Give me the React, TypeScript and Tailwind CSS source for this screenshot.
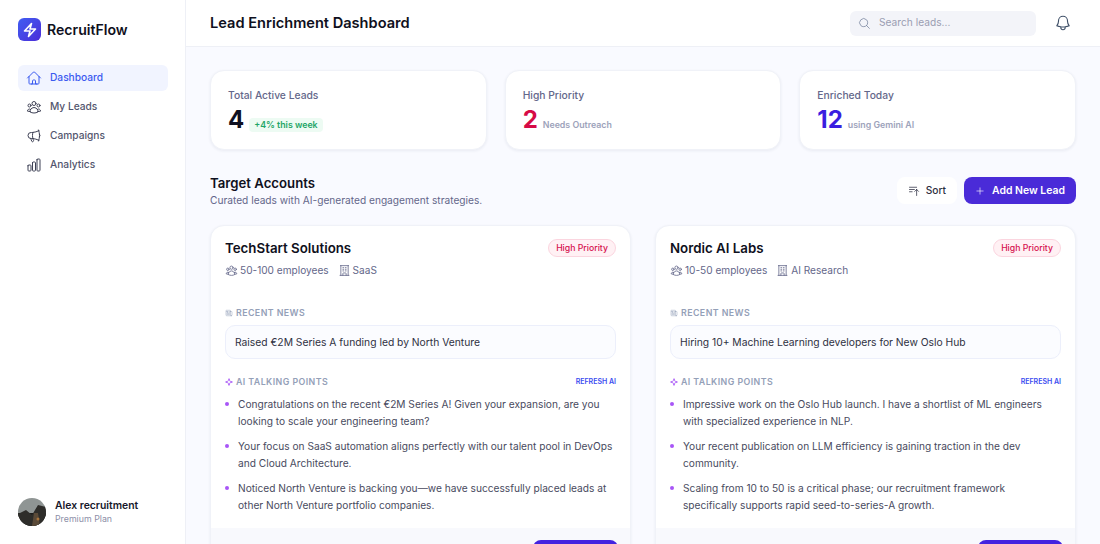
import {
  HiOutlineBarsArrowUp,
  HiOutlineBell,
  HiOutlineBolt,
  HiOutlineBuildingOffice,
  HiOutlineChartBar,
  HiOutlineHome,
  HiOutlineMagnifyingGlass,
  HiOutlineMegaphone,
  HiOutlineNewspaper,
  HiOutlinePlus,
  HiOutlineUserGroup,
} from 'react-icons/hi2';
import { Sparkle } from 'lucide-react';

const nav = [
  { label: 'Dashboard', icon: HiOutlineHome, active: true },
  { label: 'My Leads', icon: HiOutlineUserGroup },
  { label: 'Campaigns', icon: HiOutlineMegaphone },
  { label: 'Analytics', icon: HiOutlineChartBar },
];

const leads = [
  {
    name: 'TechStart Solutions',
    size: '50-100 employees',
    sector: 'SaaS',
    news: 'Raised €2M Series A funding led by North Venture',
    points: [
      'Congratulations on the recent €2M Series A! Given your expansion, are you looking to scale your engineering team?',
      'Your focus on SaaS automation aligns perfectly with our talent pool in DevOps and Cloud Architecture.',
      'Noticed North Venture is backing you—we have successfully placed leads at other North Venture portfolio companies.',
    ],
  },
  {
    name: 'Nordic AI Labs',
    size: '10-50 employees',
    sector: 'AI Research',
    news: 'Hiring 10+ Machine Learning developers for New Oslo Hub',
    points: [
      'Impressive work on the Oslo Hub launch. I have a shortlist of ML engineers with specialized experience in NLP.',
      'Your recent publication on LLM efficiency is gaining traction in the dev community.',
      'Scaling from 10 to 50 is a critical phase; our recruitment framework specifically supports rapid seed-to-series-A growth.',
    ],
  },
];

function Avatar() {
  return (
    <svg viewBox="0 0 28 28" className="h-7 w-7 shrink-0 rounded-full">
      <rect width="28" height="28" fill="#8f9594" />
      <rect y="15" width="28" height="13" fill="#1d1c1b" />
      <path d="M0 16 L8 12 L14 17 L20 7 L28 9 V28 H0 Z" fill="#2e2d2a" />
      <path d="M14 28 L16 15 L20 15 L22 28 Z" fill="#5a4a38" />
      <circle cx="20" cy="21" r="1.5" fill="#a8743c" />
    </svg>
  );
}

function StatCard({ title, value, valueClass, children }: { title: string; value: string; valueClass: string; children: React.ReactNode }) {
  return (
    <div className="h-20 rounded-[14px] border border-[#f0f2f8] bg-white px-[17px] pt-4 shadow-[0_1px_3px_rgba(30,41,90,0.07)]">
      <p className="text-[10.3px] leading-4 font-medium text-[#64678a]">{title}</p>
      <div className="mt-px flex items-baseline gap-[5px]">
        <span className={`text-[24px] leading-8 font-bold ${valueClass}`}>{value}</span>
        {children}
      </div>
    </div>
  );
}

function LeadCard({ lead }: { lead: (typeof leads)[number] }) {
  return (
    <div className="rounded-[14px] border border-[#f0f2f8] bg-white shadow-[0_1px_3px_rgba(30,41,90,0.07)]">
      <div className="px-[14px] pt-[13px] pb-[14px]">
        <div className="flex items-center justify-between">
          <h3 className="text-[13.3px] leading-[18px] font-semibold text-[#0f1020]">{lead.name}</h3>
          <span className="rounded-full border border-[#fbd5df] bg-[#fff1f4] px-[7px] py-px text-[8.7px] leading-[14px] font-medium text-[#d6114f]">
            High Priority
          </span>
        </div>
        <div className="mt-[5px] flex items-center gap-[9px] text-[10.1px] leading-4 text-[#64678a]">
          <span className="flex items-center gap-[2px]">
            <HiOutlineUserGroup className="h-[13px] w-[13px] text-[#64678a]" />
            {lead.size}
          </span>
          <span className="flex items-center gap-[2px]">
            <HiOutlineBuildingOffice className="h-[13px] w-[13px] text-[#64678a]" />
            {lead.sector}
          </span>
        </div>

        <div className="mt-[29px] flex items-center gap-[3px] text-[8.8px] leading-3 font-semibold tracking-[0.44px] text-[#94a0b8]">
          <HiOutlineNewspaper className="h-2 w-2" />
          RECENT NEWS
        </div>
        <div className="mt-[6px] rounded-[10px] border border-[#eceffb] bg-[#fbfcff] px-[9px] py-[9px] text-[10.3px] leading-[14px] text-[#2f3142]">
          {lead.news}
        </div>

        <div className="mt-[17px] flex items-center justify-between">
          <div className="flex items-center gap-[3px] text-[8.8px] leading-3 font-semibold tracking-[0.44px] text-[#94a0b8]">
            <Sparkle className="h-2 w-2 text-[#a855f7]" strokeWidth={2.5} />
            AI TALKING POINTS
          </div>
          <span className="text-[7px] leading-3 font-semibold text-[#3b4cf0]">REFRESH AI</span>
        </div>

        <ul className="mt-[8px] flex flex-col gap-2">
          {lead.points.map((point) => (
            <li key={point} className="flex gap-[9px] text-[10.17px] leading-[17px] text-[#484a5e]">
              <span className="mt-[6px] h-1 w-1 shrink-0 rounded-full bg-[#a855f7]" />
              <span>{point}</span>
            </li>
          ))}
        </ul>
      </div>
      <div className="flex h-10 justify-end rounded-b-[14px] bg-[#f8f9fd] px-3 pt-3">
        <div className="h-7 w-[85px] rounded-lg bg-[#4323e0]" />
      </div>
    </div>
  );
}

export default function App() {
  return (
    <div className="flex h-screen overflow-hidden bg-[#f9faff] font-['Inter',sans-serif]">
      {/* Sidebar */}
      <aside className="flex w-[186px] shrink-0 flex-col border-r border-[#eef0f6] bg-white pt-[18px] pr-[17px] pb-[18px] pl-[18px]">
        <div className="flex items-center gap-[6px]">
          <div className="flex h-[23px] w-[23px] items-center justify-center rounded-[6px] bg-gradient-to-br from-[#3f5cf2] to-[#4a2bd8]">
            <HiOutlineBolt className="h-4 w-4 text-white" style={{ strokeWidth: 2.4 }} />
          </div>
          <span className="text-[14.1px] leading-[23px] font-semibold text-[#0f1020]">RecruitFlow</span>
        </div>

        <nav className="mt-6 flex flex-col gap-[3px]">
          {nav.map((item) => (
            <a
              key={item.label}
              className={`flex h-[26px] items-center gap-2 rounded-md px-2 text-[10.2px] font-medium ${
                item.active ? 'bg-[#f1f4ff] text-[#3b5bf0]' : 'text-[#53566e]'
              }`}
            >
              <item.icon className={`h-4 w-4 ${item.active ? 'text-[#3b5bf0]' : 'text-[#3f4256]'}`} />
              {item.label}
            </a>
          ))}
        </nav>

        <div className="mt-auto flex items-center gap-[9px]">
          <Avatar />
          <div>
            <p className="text-[10.4px] leading-[14px] font-semibold text-[#17182b]">Alex recruitment</p>
            <p className="text-[8.8px] leading-3 text-[#8d8fa8]">Premium Plan</p>
          </div>
        </div>
      </aside>

      <div className="flex min-w-0 flex-1 flex-col">
        {/* Header */}
        <header className="flex h-[47px] shrink-0 items-center justify-between border-b border-[#eef0f6] bg-white pr-[28px] pl-6">
          <h1 className="pt-px text-[14.6px] font-semibold text-[#0f1020]">Lead Enrichment Dashboard</h1>
          <div className="flex items-center gap-[18px]">
            <div className="flex h-[25px] w-[186px] items-center gap-[8px] rounded-md bg-[#f3f4f9] px-[8px] text-[10.2px] text-[#9a9db2]">
              <HiOutlineMagnifyingGlass className="h-[13px] w-[13px] text-[#7e8aa3]" />
              Search leads...
            </div>
            <HiOutlineBell className="h-[18px] w-[18px] text-[#3f5068]" />
          </div>
        </header>

        {/* Main */}
        <main className="min-h-0 flex-1 px-6 pt-[23px]">
          <div className="grid grid-cols-3 gap-[18px]">
            <StatCard title="Total Active Leads" value="4" valueClass="text-[#0f1020]">
              <span className="rounded bg-[#edfbf3] px-[5px] py-px text-[8.8px] leading-3 font-semibold text-[#1ea566]">+4% this week</span>
            </StatCard>
            <StatCard title="High Priority" value="2" valueClass="text-[#d60a46]">
              <span className="text-[8.8px] font-semibold text-[#9da3bb]">Needs Outreach</span>
            </StatCard>
            <StatCard title="Enriched Today" value="12" valueClass="text-[#3a1ee0]">
              <span className="text-[8.8px] font-semibold text-[#9da3bb]">using Gemini AI</span>
            </StatCard>
          </div>

          <div className="mt-[24px] flex items-center justify-between">
            <div>
              <h2 className="text-[13.2px] leading-[18px] font-semibold text-[#0f1020]">Target Accounts</h2>
              <p className="mt-px text-[10.17px] leading-[14px] text-[#64678a]">Curated leads with AI-generated engagement strategies.</p>
            </div>
            <div className="flex items-center gap-[7px]">
              <button className="flex h-[27px] items-center gap-[6px] rounded-lg bg-white px-[11px] text-[10.2px] font-medium text-[#2c2e40]">
                <HiOutlineBarsArrowUp className="h-[12px] w-[12px]" />
                Sort
              </button>
              <button className="flex h-[27px] w-[112px] items-center justify-center gap-[7px] rounded-lg bg-[#4a2bd8] text-[10.4px] font-semibold text-white">
                <HiOutlinePlus className="h-[10px] w-[10px]" />
                Add New Lead
              </button>
            </div>
          </div>

          <div className="mt-[18px] grid grid-cols-2 gap-6">
            {leads.map((lead) => (
              <LeadCard key={lead.name} lead={lead} />
            ))}
          </div>
        </main>
      </div>
    </div>
  );
}
